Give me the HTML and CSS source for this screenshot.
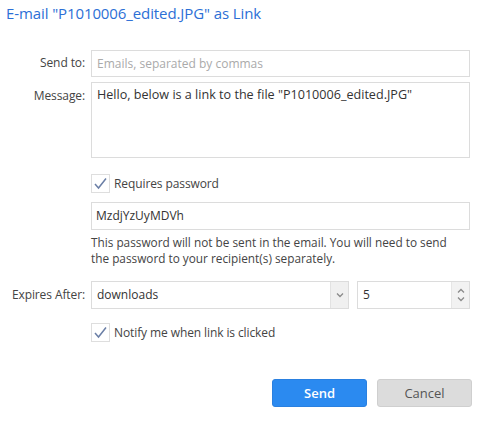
FILE: index.html
```html
<!DOCTYPE html>
<html>
<head>
<meta charset="utf-8">
<link rel="stylesheet" href="styles.css">
</head>
<body>
<div class="dialog">
  <h1 class="title">E-mail "P1010006_edited.JPG" as Link</h1>
  <div class="form">
    <label class="lbl lbl-send">Send to:</label>
    <div class="field input placeholder">Emails, separated by commas</div>

    <label class="lbl lbl-msg">Message:</label>
    <div class="field textarea">Hello, below is a link to the file "P1010006_edited.JPG"</div>

    <div></div>
    <div class="check-row check-pw">
      <span class="box"><svg width="15" height="13" viewBox="0 0 15 13"><path d="M2 7 L5.5 11 L13 1.5" fill="none" stroke="#6b7fa6" stroke-width="1.5"/></svg></span>
      <span>Requires password</span>
    </div>

    <div></div>
    <div class="field input pw">MzdjYzUyMDVh</div>

    <div></div>
    <p class="help">This password will not be sent in the email. You will need to send the password to your recipient(s) separately.</p>

    <label class="lbl lbl-exp">Expires After:</label>
    <div class="expires">
      <div class="select">
        <span class="sel-text">downloads</span>
        <span class="sel-arrow"><svg width="8" height="6" viewBox="0 0 8 6"><path d="M1 1.5 L4 4.5 L7 1.5" fill="none" stroke="#8a8a8a" stroke-width="1.3"/></svg></span>
      </div>
      <div class="number">
        <span class="num-text">5</span>
        <span class="spin">
          <svg width="8" height="6" viewBox="0 0 8 6"><path d="M1 4.5 L4 1.5 L7 4.5" fill="none" stroke="#8a8a8a" stroke-width="1.3"/></svg>
          <svg width="8" height="6" viewBox="0 0 8 6"><path d="M1 1.5 L4 4.5 L7 1.5" fill="none" stroke="#8a8a8a" stroke-width="1.3"/></svg>
        </span>
      </div>
    </div>

    <div></div>
    <div class="check-row check-notify">
      <span class="box"><svg width="15" height="13" viewBox="0 0 15 13"><path d="M2 7 L5.5 11 L13 1.5" fill="none" stroke="#6b7fa6" stroke-width="1.5"/></svg></span>
      <span>Notify me when link is clicked</span>
    </div>
  </div>
  <div class="buttons">
    <button class="btn btn-send">Send</button>
    <button class="btn btn-cancel">Cancel</button>
  </div>
</div>
</body>
</html>
```
FILE: styles.css
```css
html, body {
  margin: 0;
  padding: 0;
  background: #fff;
}
body {
  font-family: "Open Sans", "Noto Sans", sans-serif;
  font-size: 12px;
  color: #333;
}
.dialog {
  width: 480px;
}
.title {
  margin: 0;
  padding: 3px 0 0 6px;
  font-size: 15px;
  font-weight: normal;
  color: #2c6fd6;
  line-height: 20px;
  letter-spacing: -0.1px;
}
.form {
  display: grid;
  grid-template-columns: 85px 379px;
  column-gap: 6px;
  margin-top: 27px;
  align-items: start;
}
.lbl {
  text-align: right;
  color: #444;
  line-height: 16px;
  letter-spacing: -0.1px;
}
.lbl-send { margin-top: 5px; }
.lbl-msg { margin-top: 11px; }
.lbl-exp { margin-top: 21px; }
.field {
  box-sizing: border-box;
  border: 1px solid #dcdcdc;
  padding: 0 5px;
}
.input {
  height: 27px;
  line-height: 25px;
}
.placeholder { color: #aaa; }
.textarea {
  margin-top: 5px;
  height: 76px;
  line-height: 18px;
  padding-top: 3px;
  font-size: 12.6px;
}
.check-row {
  display: flex;
  align-items: center;
  gap: 4px;
  color: #444;
  height: 19px;
  letter-spacing: -0.1px;
}
.check-pw { margin-top: 16px; }
.box {
  box-sizing: border-box;
  width: 19px;
  height: 19px;
  border: 1px solid #dedede;
  display: flex;
  align-items: center;
  justify-content: center;
}
.pw {
  margin-top: 9px;
  height: 28px;
  line-height: 26px;
  padding-left: 4px;
}
.help {
  margin: 4px 0 0;
  line-height: 16px;
  color: #444;
  font-size: 11.8px;
  max-width: 362px;
}
.expires {
  display: flex;
  gap: 8px;
  margin-top: 15px;
}
.select {
  box-sizing: border-box;
  width: 258px;
  height: 28px;
  border: 1px solid #dcdcdc;
  display: flex;
}
.sel-text {
  flex: 1;
  padding-left: 5px;
  line-height: 26px;
}
.sel-arrow {
  width: 17px;
  background: #f0f0f0;
  border-left: 1px solid #e2e2e2;
  display: flex;
  align-items: center;
  justify-content: center;
}
.number {
  box-sizing: border-box;
  width: 113px;
  height: 28px;
  border: 1px solid #dcdcdc;
  display: flex;
}
.num-text {
  flex: 1;
  padding-left: 5px;
  line-height: 26px;
}
.spin {
  width: 17px;
  background: #f2f2f2;
  border-left: 1px solid #e6e6e6;
  display: flex;
  flex-direction: column;
  align-items: center;
  justify-content: center;
  gap: 2px;
}
.check-notify { margin-top: 14px; }
.buttons {
  display: flex;
  justify-content: flex-end;
  gap: 10px;
  padding-right: 8px;
  margin-top: 37px;
}
.btn {
  box-sizing: border-box;
  width: 95px;
  height: 28px;
  border-radius: 3px;
  font-family: "Open Sans", "Noto Sans", sans-serif;
  font-size: 13px;
  padding: 0;
}
.btn-send {
  background: #2b8af0;
  border: 1px solid #2a80e0;
  color: #fff;
  font-weight: 600;
}
.btn-cancel {
  background: #dcdcdc;
  border: 1px solid #cfcfcf;
  color: #555;
}
```
